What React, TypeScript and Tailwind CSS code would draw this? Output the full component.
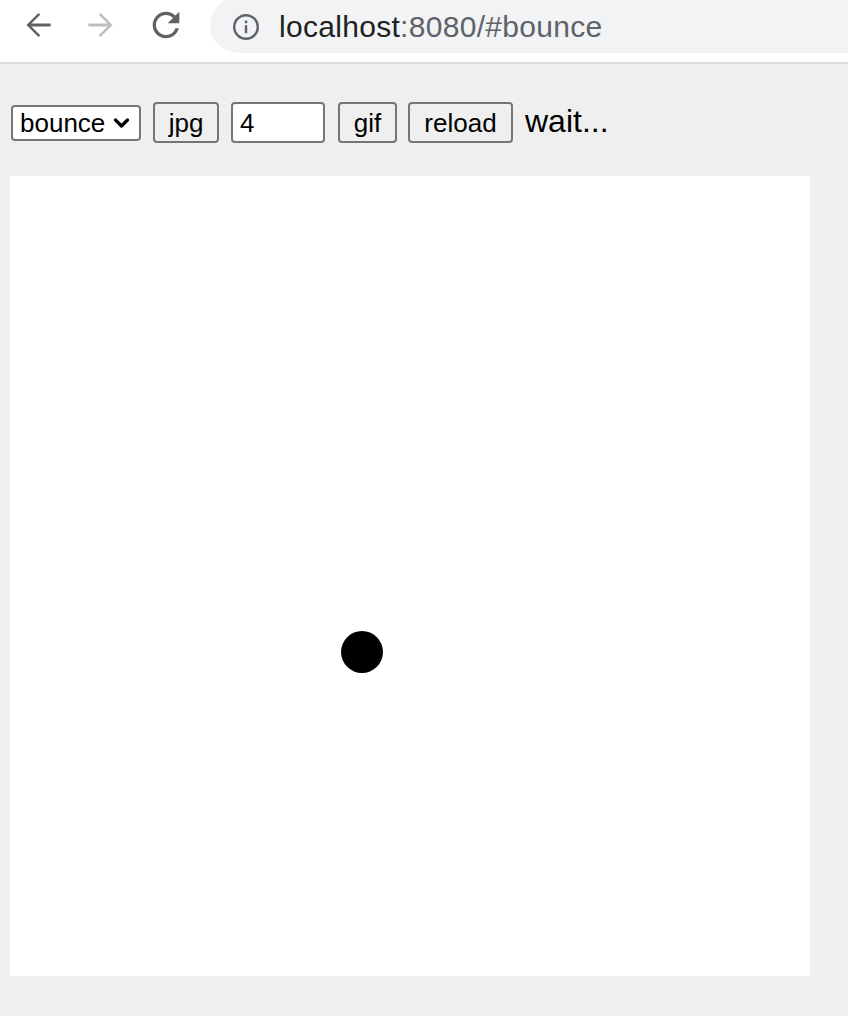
import React from "react";

export default function App() {
  const font = { fontFamily: '"Liberation Sans", Arial, sans-serif' };
  return (
    <div className="w-[848px] h-[1016px] bg-[#efefef] overflow-hidden" style={font}>
      {/* browser chrome */}
      <div className="h-[62px] bg-white flex items-start">
        <div className="w-[210px] h-[50px] flex items-center shrink-0">
          <svg className="ml-[19px]" width="38" height="38" viewBox="0 0 24 24">
            <path d="M20 11.1H7.83l5.59-5.59L12.3 4.4 4.7 12l7.6 7.6 1.12-1.11-5.59-5.59H20v-1.8z" fill="#5f6368" />
          </svg>
          <svg className="ml-[25px]" width="38" height="38" viewBox="0 0 24 24">
            <path d="M11.7 4.4l-1.12 1.11 5.59 5.59H4v1.8h12.17l-5.59 5.59 1.12 1.11 7.6-7.6z" fill="#bdbdbd" />
          </svg>
          <svg className="ml-[26px]" width="40" height="40" viewBox="0 0 24 24">
            <path d="M17.65 6.35A7.958 7.958 0 0 0 12 4c-4.42 0-7.99 3.58-7.99 8s3.57 8 7.99 8c3.73 0 6.84-2.55 7.73-6h-2.08A5.99 5.99 0 0 1 12 18c-3.31 0-6-2.69-6-6s2.69-6 6-6c1.66 0 3.14.69 4.22 1.78L13 11h7V4l-2.35 2.35z" fill="#5f6368" />
          </svg>
        </div>
        <div className="-mt-[3px] h-[56px] flex-1 bg-[#f1f3f4] rounded-l-[28px] flex items-center">
          <svg className="ml-[22px] mt-[3px]" width="28" height="28" viewBox="0 0 28 28">
            <circle cx="14" cy="14" r="11.8" fill="none" stroke="#5f6368" strokeWidth="2.4" />
            <rect x="12.8" y="12.2" width="2.4" height="8" fill="#5f6368" />
            <rect x="12.8" y="7.6" width="2.4" height="2.6" fill="#5f6368" />
          </svg>
          <span className="ml-[19px] mt-[3px] text-[30px] leading-none tracking-[0.3px]">
            <span className="text-[#202124]">localhost</span>
            <span className="text-[#5f6368]">:8080/#bounce</span>
          </span>
        </div>
      </div>
      <div className="h-[2px] bg-[#dadce0]" />

      {/* controls */}
      <div className="mt-[38px] h-[41px] flex items-center text-black">
        <div className="ml-[11px] w-[130px] h-[36px] bg-white border-2 border-[#767676] rounded-[4px] flex items-center text-[26px] leading-none">
          <span className="ml-[7px]">bounce</span>
          <svg className="ml-[8px]" width="17" height="12" viewBox="0 0 16 12">
            <path d="M2 3l6 6 6-6" fill="none" stroke="#000" strokeWidth="3.2" strokeLinecap="round" strokeLinejoin="round" />
          </svg>
        </div>
        <div className="ml-[12px] w-[66px] h-[41px] bg-[#efefef] border-2 border-[#767676] rounded-[4px] flex items-center justify-center text-[26px] leading-none">
          jpg
        </div>
        <div className="ml-[12px] w-[94px] h-[41px] bg-white border-2 border-[#767676] rounded-[4px] flex items-center text-[26px] leading-none">
          <span className="ml-[7px]">4</span>
        </div>
        <div className="ml-[13px] w-[59px] h-[41px] bg-[#efefef] border-2 border-[#767676] rounded-[4px] flex items-center justify-center text-[26px] leading-none">
          gif
        </div>
        <div className="ml-[11px] w-[105px] h-[41px] bg-[#efefef] border-2 border-[#767676] rounded-[4px] flex items-center justify-center text-[26px] leading-none">
          reload
        </div>
        <span className="ml-[12px] text-[32px] leading-none -mt-[4px]">wait...</span>
      </div>

      {/* canvas */}
      <div className="mt-[33px] ml-[10px] w-[800px] h-[800px] bg-white relative">
        <div className="absolute left-[331px] top-[455px] w-[42px] h-[42px] rounded-full bg-black" />
      </div>
    </div>
  );
}
